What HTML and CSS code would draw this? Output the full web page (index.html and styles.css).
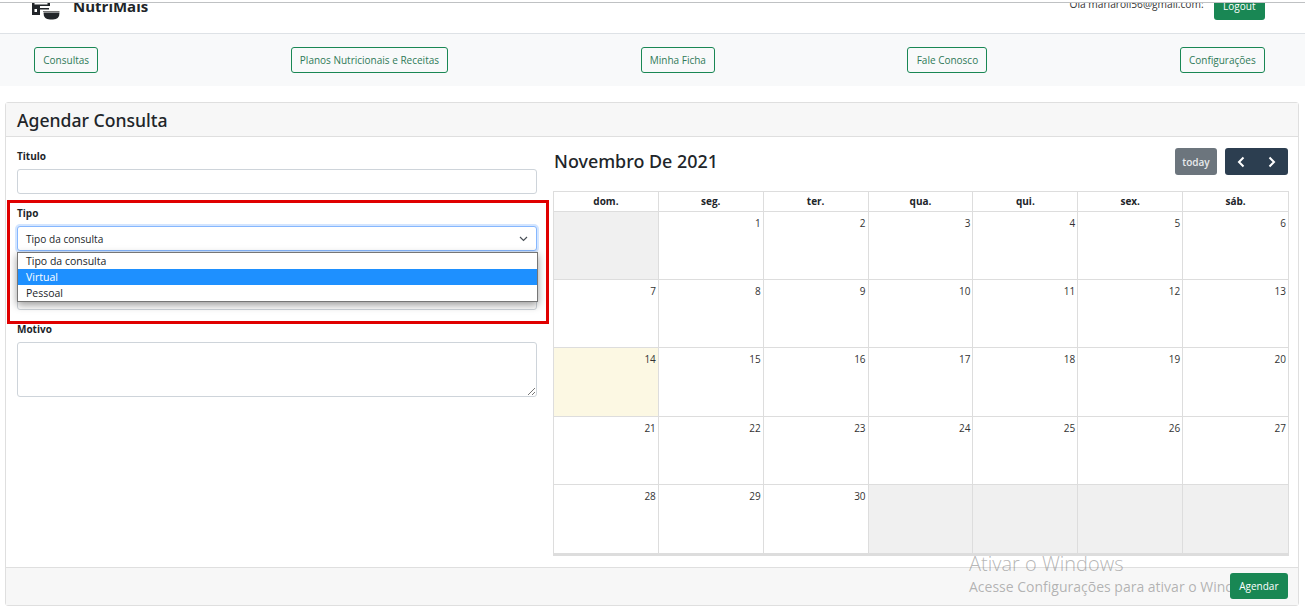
FILE: index.html
```html
<!DOCTYPE html>
<html lang="pt-BR">
<head>
<meta charset="utf-8">
<title>Agendar Consulta</title>
<link rel="stylesheet" href="styles.css">
</head>
<body>
<header class="topbar">
  <div class="brand">
    <svg class="logo" width="29" height="17" viewBox="0 0 29 17"><path d="M1 0h2.500v1.500H16.500V0H19v3H9v9H1zM3.500 6v3H6V6z" fill="#212529" fill-rule="evenodd"/><rect x="9" y="5" width="9" height="1.500" fill="#212529"/><rect x="12" y="8" width="16.500" height="1" fill="#777"/><path d="M12.500 9.500h16q0 7-6.500 7h-3q-6.500 0-6.500-7z" fill="#212529"/></svg>
    <span class="brand-name">NutriMais</span>
  </div>
  <div class="user">
    <span class="user-mail">Olá mariaroli56@gmail.com:</span>
    <span class="btn btn-solid btn-logout">Logout</span>
  </div>
</header>
<nav class="subnav">
  <a class="btn btn-line">Consultas</a>
  <a class="btn btn-line">Planos Nutricionais e Receitas</a>
  <a class="btn btn-line">Minha Ficha</a>
  <a class="btn btn-line">Fale Conosco</a>
  <a class="btn btn-line">Configurações</a>
</nav>
<main class="card">
  <h1 class="card-title">Agendar Consulta</h1>
  <div class="card-body">
    <form class="form">
      <div class="field"><label class="label">Titulo</label><div class="input"></div></div>
      <div class="field">
        <label class="label">Tipo</label>
        <div class="input select-focus">Tipo da consulta
          <svg class="chev" width="9" height="6" viewBox="0 0 9 6"><path d="M1 1l3.500 3.500L8 1" fill="none" stroke="#495057" stroke-width="1.200"/></svg>
        </div>
        <ul class="dropdown">
          <li>Tipo da consulta</li>
          <li class="active">Virtual</li>
          <li>Pessoal</li>
        </ul>
      </div>
      <div class="field field-tall"><label class="label">Data</label><div class="input"></div></div>
      <div class="field"><label class="label">Motivo</label><div class="input textarea">
        <svg class="grip" width="8" height="8" viewBox="0 0 8 8"><path d="M1 8l7-7M5 8l3-3" stroke="#777" stroke-width="1"/></svg>
      </div></div>
      <div class="highlight"></div>
    </form>
    <section class="calendar">
      <div class="cal-head">
        <h2 class="cal-title">Novembro De 2021</h2>
        <div class="cal-tools">
          <span class="today">today</span>
          <span class="pager">
            <svg width="8" height="12" viewBox="0 0 8 12"><path d="M6.500 1.500L2 6l4.500 4.500" fill="none" stroke="#fff" stroke-width="2"/></svg>
            <svg width="8" height="12" viewBox="0 0 8 12"><path d="M1.500 1.500L6 6l-4.500 4.500" fill="none" stroke="#fff" stroke-width="2"/></svg>
          </span>
        </div>
      </div>
      <div class="cal-grid">
        <div class="dow">dom.</div><div class="dow">seg.</div><div class="dow">ter.</div><div class="dow">qua.</div><div class="dow">qui.</div><div class="dow">sex.</div><div class="dow">sáb.</div>
        <div class="day off"></div><div class="day">1</div><div class="day">2</div><div class="day">3</div><div class="day">4</div><div class="day">5</div><div class="day">6</div>
        <div class="day">7</div><div class="day">8</div><div class="day">9</div><div class="day">10</div><div class="day">11</div><div class="day">12</div><div class="day">13</div>
        <div class="day now">14</div><div class="day">15</div><div class="day">16</div><div class="day">17</div><div class="day">18</div><div class="day">19</div><div class="day">20</div>
        <div class="day">21</div><div class="day">22</div><div class="day">23</div><div class="day">24</div><div class="day">25</div><div class="day">26</div><div class="day">27</div>
        <div class="day">28</div><div class="day">29</div><div class="day">30</div><div class="day off"></div><div class="day off"></div><div class="day off"></div><div class="day off"></div>
      </div>
    </section>
  </div>
  <footer class="card-foot"><span class="btn btn-solid btn-save">Agendar</span></footer>
</main>
<aside class="watermark">
  <div class="wm-big">Ativar o Windows</div>
  <div class="wm-small">Acesse Configurações para ativar o Windows.</div>
</aside>
</body>
</html>
```
FILE: styles.css
```css
* { box-sizing: border-box; }
html, body { margin: 0; height: 608px; overflow: hidden; }
body { position: relative; background: #fff; color: #212529; font-family: "Open Sans", "Noto Sans", sans-serif; font-size: 10px; padding-top: 2px; }
.topbar { height: 32px; border-top: 1px solid #bfc1c3; border-bottom: 1px solid #dee2e6; padding: 0 40px 0 31px; display: flex; justify-content: space-between; align-items: flex-start; overflow: hidden; }
.brand { display: flex; align-items: flex-start; gap: 13px; }
.logo { display: block; flex: none; }
.brand-name { font-size: 15px; font-weight: 700; line-height: 20px; margin-top: -7px; }
.user { display: flex; align-items: flex-start; gap: 10px; }
.user-mail { font-size: 10.2px; color: #333; line-height: 12px; margin-top: -5px; }
.btn { display: inline-flex; align-items: center; justify-content: center; height: 26px; padding: 0 8.3px; border-radius: 3px; font-size: 10px; white-space: nowrap; }
.btn-solid { background: #198754; color: #fff; padding: 0 9.5px; }
.btn-logout { margin-top: -9px; padding-bottom: 3px; }
.btn-save { position: relative; z-index: 2; }
.btn-line { border: 1px solid #198754; color: #2f7a58; background: transparent; }
.subnav { height: 52px; background: #f8f9fa; padding: 13px 40px 0 34px; display: flex; justify-content: space-between; align-items: flex-start; }
.card { margin: 16px 6px 0 5px; height: 504px; border: 1px solid #dfdfdf; border-radius: 3px; display: flex; flex-direction: column; }
.card-title { margin: 0; height: 34px; padding: 0 11px; background: #f7f7f7; border-bottom: 1px solid #dfdfdf; font-family: "Noto Sans", "Open Sans", sans-serif; font-size: 17.6px; font-weight: 500; line-height: 35px; }
.card-body { flex: 1; display: flex; gap: 16px; padding: 0 10px 0 11px; }
.form { position: relative; width: 520px; padding-top: 13px; }
.field { position: relative; height: 57px; }
.field-tall { height: 59px; }
.field-tall .label { height: 21px; }
.label { display: block; height: 19px; font-size: 10px; font-weight: 700; line-height: 13px; }
.input { height: 25px; border: 1px solid #ced4da; border-radius: 3px; background: #fff; display: flex; align-items: center; padding-left: 8px; font-size: 10.1px; position: relative; }
.select-focus { border-color: #86b7fe; box-shadow: 0 0 0 2px rgba(13, 110, 253, .18); }
.chev { position: absolute; right: 8px; top: 9px; }
.textarea { height: 55px; }
.grip { position: absolute; right: 1px; bottom: 1px; }
.dropdown { position: absolute; left: 0; top: 45px; width: 521px; margin: 0; padding: 0; list-style: none; background: #fff; border: 1px solid #767676; box-shadow: 0 3px 8px rgba(0, 0, 0, .4); z-index: 2; }
.dropdown li { height: 16px; padding-left: 8px; line-height: 16px; font-size: 10.5px; }
.dropdown .active { background: #1e90ff; color: #fff; }
.highlight { position: absolute; left: -10px; top: 63px; width: 542px; height: 124px; border: 3px solid #e00000; z-index: 3; pointer-events: none; }
.calendar { flex: 1; padding-top: 11px; min-width: 0; }
.cal-head { height: 43px; width: 735px; padding-left: 1px; display: flex; justify-content: space-between; align-items: flex-start; }
.cal-title { margin: 1px 0 0; font-family: "Noto Sans", "Open Sans", sans-serif; font-size: 17.9px; font-weight: 500; line-height: 24px; }
.cal-tools { display: flex; gap: 8px; }
.today { width: 42px; height: 27px; border-radius: 3px; background: #6c757d; color: #e8eaec; font-size: 10px; font-weight: 600; display: flex; align-items: center; justify-content: center; }
.pager { width: 63px; height: 27px; border-radius: 3px; background: #2c3e50; display: flex; align-items: center; justify-content: space-between; padding: 0 12px; }
.cal-grid { display: grid; grid-template-columns: repeat(7, 1fr); grid-template-rows: 20px 68px 68px 69px 68px 69px; border: 1px solid #ddd; border-bottom-width: 3px; width: 736px; height: 365px; }
.dow { border-right: 1px solid #ddd; border-bottom: 1px solid #ddd; text-align: center; font-size: 10px; font-weight: 700; line-height: 19px; }
.day { border-right: 1px solid #ddd; border-bottom: 1px solid #ddd; text-align: right; font-size: 10px; color: #333; padding: 4px 2px 0 0; line-height: 14px; }
.dow:nth-child(7n), .day:nth-child(7n) { border-right: 0; }
.off { background: #f0f0f0; }
.now { background: #fcf8e3; }
.card-foot { height: 38px; background: #f7f7f7; border-top: 1px solid #dfdfdf; padding: 5px 10px 0 0; display: flex; justify-content: flex-end; align-items: flex-start; }
.watermark { position: absolute; left: 969px; top: 553px; color: rgba(120, 120, 120, .55); white-space: nowrap; z-index: 1; pointer-events: none; }
.wm-big { font-size: 20px; line-height: 22px; font-weight: 300; }
.wm-small { font-size: 14px; line-height: 23px; }
```
